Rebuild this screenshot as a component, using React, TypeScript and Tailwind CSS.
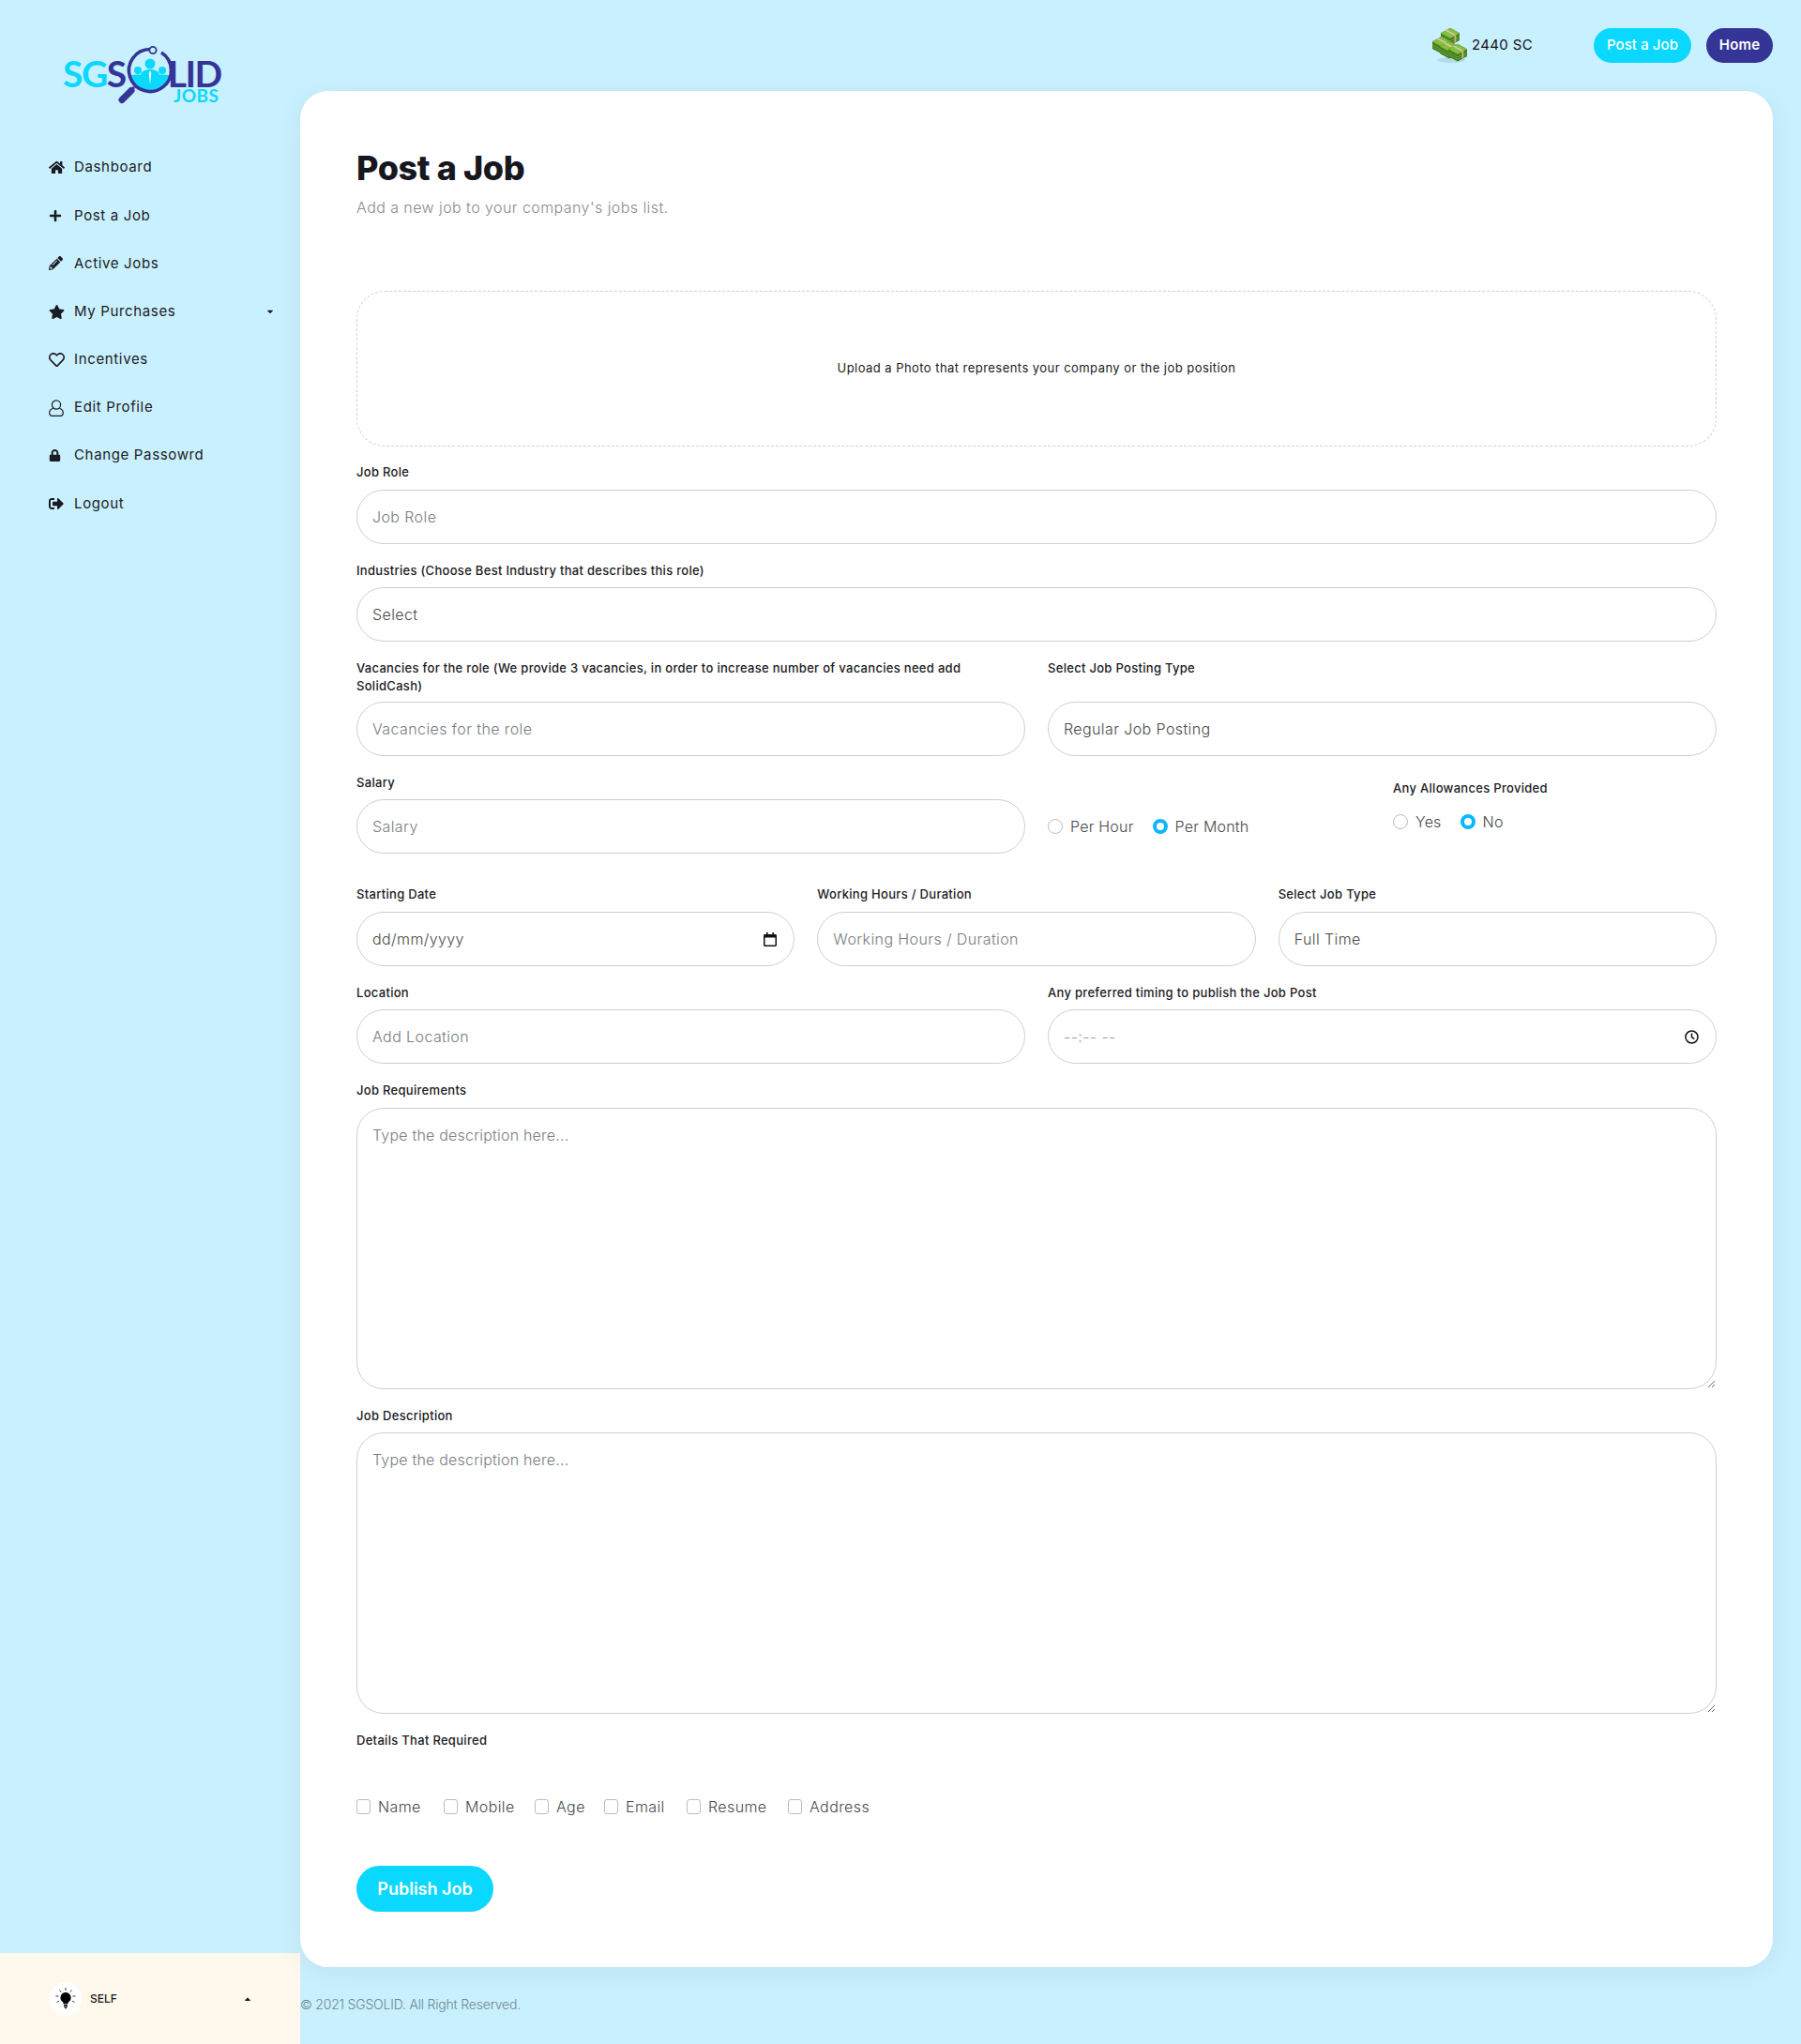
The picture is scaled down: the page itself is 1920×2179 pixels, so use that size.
import { FaHome, FaPlus, FaPencilAlt, FaStar, FaRegHeart, FaLock, FaSignOutAlt, FaCaretDown, FaCaretUp } from 'react-icons/fa';

const font = { fontFamily: 'Inter, "Noto Sans", sans-serif' };

const inputClass = "block w-full h-[58px] rounded-[29px] border border-[#cfcfcf] bg-white px-[16px] text-[16px] font-light tracking-[0.4px] text-[#4a4a4a] placeholder:text-[#777d83] outline-none";
const textareaClass = "block w-full h-[300px] rounded-[29px] border border-[#cfcfcf] px-[16px] py-[16px] text-[16px] font-light tracking-[0.2px] placeholder:text-[#777d83] outline-none";

function Label({ children }: { children: React.ReactNode }) {
	return <label className="block mb-[7.5px] text-[13px] leading-[18.5px] font-medium tracking-[0.3px] text-[#1b1b23] min-h-[20px]">{children}</label>;
}

function Field({ label, placeholder, value, className }: { label: string; placeholder?: string; value?: string; className?: string }) {
	return (
		<div className={className}>
			<Label>{label}</Label>
			<input className={inputClass} placeholder={placeholder} defaultValue={value} />
		</div>
	);
}

function Radio({ label, checked, name }: { label: string; checked?: boolean; name: string }) {
	return (
		<label className="flex items-center gap-[8px] text-[16px] font-light tracking-[0.2px] text-[#4a4a4a]">
			<input type="radio" name={name} defaultChecked={checked} className="appearance-none w-[16px] h-[16px] rounded-full border border-[#bdbdbd] bg-white checked:border-[4px] checked:border-[#0ab8ff]" />
			{label}
		</label>
	);
}

function Check({ label, className }: { label: string; className: string }) {
	return (
		<label className={`flex items-center gap-[8px] text-[16px] font-light tracking-[0.4px] text-[#4a4a4a] ${className}`}>
			<input type="checkbox" className="appearance-none w-[15px] h-[16px] rounded-[3px] border border-[#bdbdbd] bg-white" />
			{label}
		</label>
	);
}

function Logo() {
	return (
		<div className="relative ml-[67px] h-[72px] w-[175px] mt-[48px]">
			<div className="flex items-start pt-[15px] text-[39px] leading-[30px] font-bold tracking-[-1.5px]" style={{ fontFamily: 'Lato, sans-serif' }}>
				<span className="text-[#0ad8ff]">SG</span>
				<span className="text-[#353598]">S</span>
				<span className="w-[45px]" />
				<span className="text-[#353598] tracking-[-1.5px]">LID</span>
			</div>
			<span className="absolute left-[118px] top-[45.5px] text-[19px] leading-[16px] font-bold text-[#0ad8ff] tracking-[0.5px]" style={{ fontFamily: 'Lato, sans-serif' }}>JOBS</span>
			<svg className="absolute left-[55px] top-0" width="70" height="72" viewBox="0 0 70 72">
				<defs>
					<clipPath id="lens"><circle cx="38" cy="27" r="21" /></clipPath>
				</defs>
				<g clipPath="url(#lens)" fill="#0ad8ff">
					<circle cx="38" cy="20" r="5.5" />
					<path d="M28 50V33c0-5 4-7 10-7s10 2 10 7v17z" />
					<circle cx="25" cy="27" r="4" />
					<path d="M14 50V37c0-4 4-5.500 10-5.500s8 1.500 8 5.500v13z" />
					<circle cx="51" cy="27" r="4" />
					<path d="M44 50V37c0-4 2-5.500 8-5.500s10 1.500 10 5.500v13z" />
				</g>
				<path d="M38 27l-1.300 3 1.300 12 1.300-12z" fill="#fff" />
				<path d="M50 8A22.500 22.500 0 1 1 38 4.500" fill="none" stroke="#353598" strokeWidth="3.600" />
				<circle cx="41" cy="5.500" r="3.600" fill="#c9f0ff" stroke="#353598" strokeWidth="1.800" />
				<path d="M21 45l-2.500 2.500" stroke="#353598" strokeWidth="3" />
				<path d="M18 48.500L8 58.500" stroke="#353598" strokeWidth="7" strokeLinecap="round" />
			</svg>
		</div>
	);
}

function Money() {
	// strapped bundles of notes, back to front
	const stack = (x: number, y: number) => (
		<g transform={`translate(${x} ${y})`}>
			<path d="M0 5.500v7.500l10 5.500 10-5.500V5.500z" fill="#3f7a1e" />
			<path d="M0 8.500l10 5.500 10-5.500M0 10.800l10 5.500 10-5.500" stroke="#7db43a" strokeWidth=".8" fill="none" />
			<path d="M10 0L20 5.500 10 11 0 5.500z" fill="#86bf3e" stroke="#5c9a2a" strokeWidth=".6" />
			<path d="M4.500 2.500l10 5.500 1.800-1-10-5.500z" fill="#d9c79f" />
			<path d="M14.500 8v7.500l1.800-1V7z" fill="#c9b486" />
		</g>
	);
	return (
		<svg width="37" height="38" viewBox="0 0 37 38">
			<ellipse cx="20" cy="34" rx="15" ry="3" fill="#8fb4c0" opacity=".35" />
			{stack(9, 0)}
			{stack(0, 9)}
			{stack(8, 14)}
			{stack(17, 17)}
		</svg>
	);
}

function NavItem({ icon, label, caret }: { icon: React.ReactNode; label: string; caret?: boolean }) {
	return (
		<a className="flex items-center h-[51.2px] text-[15px] tracking-[0.65px] text-[#1b1b23]">
			<span className="w-[27px] flex items-center text-[#1b1b23]">{icon}</span>
			<span>{label}</span>
			{caret && <FaCaretDown className="ml-auto text-[10px]" />}
		</a>
	);
}

export default function App() {
	return (
		<div className="flex h-[2179px] bg-[#c9f0ff] text-[#1b1b23] overflow-hidden" style={font}>
			<aside className="w-[320px] flex-shrink-0 flex flex-col">
				<Logo />
				<nav className="mt-[33px] pl-[52px] pr-[27px]">
					<NavItem icon={<FaHome size={17} />} label="Dashboard" />
					<NavItem icon={<FaPlus size={14} />} label="Post a Job" />
					<NavItem icon={<FaPencilAlt size={15} />} label="Active Jobs" />
					<NavItem icon={<FaStar size={17} />} label="My Purchases" caret />
					<NavItem icon={<FaRegHeart size={17} />} label="Incentives" />
					<NavItem
						icon={
							<svg width="16" height="18" viewBox="0 0 16 18" fill="none" stroke="#1b1b23" strokeWidth="1.200">
								<circle cx="8" cy="5.500" r="4.600" />
								<path d="M4.600 9.200C2.400 10 .7 11.500.7 14c0 2 1 3.300 3 3.300h8.600c2 0 3-1.300 3-3.300 0-2.500-1.700-4-3.900-4.800" />
							</svg>
						}
						label="Edit Profile"
					/>
					<NavItem icon={<FaLock size={13} />} label="Change Passowrd" />
					<NavItem icon={<FaSignOutAlt size={16} />} label="Logout" />
				</nav>
				<div className="mt-auto h-[97px] bg-[#fff8ed] flex items-center pl-[53px] pr-[51px]">
					<span className="w-[34px] h-[36px] rounded-full bg-white flex items-center justify-center">
						<svg width="22" height="24" viewBox="0 0 22 24">
							<path d="M11 5a5.600 5.600 0 0 0-3.400 10c.8.7 1 1.400 1 2.300h4.800c0-.9.2-1.600 1-2.300A5.600 5.600 0 0 0 11 5z" fill="#000" />
							<path d="M9 18.600h4M9 20.200h4M10 21.800h2" stroke="#000" strokeWidth="1.100" />
							<path d="M11 0v3M4.500 2.500l1.600 2.200M17.500 2.500l-1.600 2.200M.5 9h3M18.500 9h3M1.500 15.500l2.400-1.300M20.500 15.500l-2.400-1.300" stroke="#222" strokeWidth=".9" />
						</svg>
					</span>
					<span className="ml-[9px] text-[12px] font-medium">SELF</span>
					<FaCaretUp className="ml-auto text-[10px]" />
				</div>
			</aside>

			<main className="flex-1 pr-[30px] flex flex-col min-w-0">
				<header className="h-[97px] flex items-center justify-end">
					<Money />
					<span className="ml-[5px] text-[15px] tracking-[0.35px] text-[#111]">2440 SC</span>
					<a className="ml-[65px] h-[37px] w-[104px] rounded-[19px] bg-[#0ad8ff] text-white text-[15px] font-medium tracking-[0.1px] flex items-center justify-center">Post a Job</a>
					<a className="ml-[16px] h-[37px] w-[71px] rounded-[19px] bg-[#353598] text-white text-[15px] font-semibold tracking-[0.2px] flex items-center justify-center">Home</a>
				</header>

				<section className="bg-white rounded-[30px] h-[2000px] px-[60px] pt-[60px] shadow-[0_5px_30px_rgba(0,0,0,0.06)]">
					<h1 className="text-[36px] leading-[44px] font-extrabold tracking-[-0.4px] text-[#17171f]">Post a Job</h1>
					<p className="mt-[8px] text-[16px] leading-[24px] font-light tracking-[0.43px] text-[#8b8b8b]">Add a new job to your company's jobs list.</p>

					<div className="mt-[77px] mb-[18px] h-[166px] rounded-[30px] border border-dashed border-[#cfcfcf] flex items-center justify-center text-[13px] tracking-[0.45px] text-[#1b1b23]">
						Upload a Photo that represents your company or the job position
					</div>

					<Field className="mb-[19px]" label="Job Role" placeholder="Job Role" />
					<Field className="mb-[19px]" label="Industries (Choose Best Industry that describes this role)" value="Select" />

					<div className="grid grid-cols-2 gap-x-[24px] mb-[19px]">
						<div>
							<div className="pr-[40px]">
								<Label>Vacancies for the role (We provide 3 vacancies, in order to increase number of vacancies need add SolidCash)</Label>
							</div>
							<input className={inputClass} placeholder="Vacancies for the role" />
						</div>
						<div className="flex flex-col justify-between">
							<Label>Select Job Posting Type</Label>
							<input className={inputClass} defaultValue="Regular Job Posting" />
						</div>
					</div>

					<div className="grid grid-cols-2 gap-x-[24px] mb-[34px]">
						<Field label="Salary" placeholder="Salary" />
						<div className="flex">
							<div className="w-[368px] flex items-center gap-[20px] pt-[28px]">
								<Radio name="pay" label="Per Hour" />
								<Radio name="pay" label="Per Month" checked />
							</div>
							<div className="pt-[6px]">
								<Label>Any Allowances Provided</Label>
								<div className="flex items-center gap-[20px] mt-[13px]">
									<Radio name="allow" label="Yes" />
									<Radio name="allow" label="No" checked />
								</div>
							</div>
						</div>
					</div>

					<div className="grid grid-cols-3 gap-x-[24px] mb-[19px]">
						<div>
							<Label>Starting Date</Label>
							<div className="relative">
								<input className={inputClass} defaultValue="dd/mm/yyyy" />
								<svg className="absolute right-[19px] top-[22px]" width="14" height="15" viewBox="0 0 14 15">
									<path d="M3 0h1.600v2h4.800V0H11v2h1.400A1.500 1.500 0 0 1 14 3.500v10a1.500 1.500 0 0 1-1.600 1.500H1.600A1.500 1.500 0 0 1 0 13.500v-10A1.500 1.500 0 0 1 1.600 2H3zM1.500 5.500v8h11v-8z" fill="#111" />
								</svg>
							</div>
						</div>
						<Field label="Working Hours / Duration" placeholder="Working Hours / Duration" />
						<Field label="Select Job Type" value="Full Time" />
					</div>

					<div className="grid grid-cols-2 gap-x-[24px] mb-[19px]">
						<Field label="Location" placeholder="Add Location" />
						<div>
							<Label>Any preferred timing to publish the Job Post</Label>
							<div className="relative">
								<input className={`${inputClass} text-[#9a9a9a]`} defaultValue="--:-- --" />
								<svg className="absolute right-[19px] top-[22px]" width="15" height="15" viewBox="0 0 15 15" fill="none" stroke="#111" strokeWidth="1.500">
									<circle cx="7.500" cy="7.500" r="6.500" />
									<path d="M7.500 3.500v4.200l2.800 2" />
								</svg>
							</div>
						</div>
					</div>

					<div className="mb-[19px]">
						<Label>Job Requirements</Label>
						<textarea className={textareaClass} placeholder="Type the description here..." />
					</div>

					<div className="mb-[19px]">
						<Label>Job Description</Label>
						<textarea className={textareaClass} placeholder="Type the description here..." />
					</div>

					<Label>Details That Required</Label>
					<div className="flex items-center mt-[48px]">
						<Check label="Name" className="w-[93px]" />
						<Check label="Mobile" className="w-[97px]" />
						<Check label="Age" className="w-[74px]" />
						<Check label="Email" className="w-[88px]" />
						<Check label="Resume" className="w-[108px]" />
						<Check label="Address" className="w-[100px]" />
					</div>

					<button className="mt-[51px] h-[49px] w-[146px] rounded-[25px] bg-[#0ad8ff] text-white text-[18px] font-semibold">Publish Job</button>
				</section>

				<footer className="mt-[28px] text-[14px] leading-[24px] font-light tracking-[-0.2px] text-[#6f8791]">© 2021 SGSOLID. All Right Reserved.</footer>
			</main>
		</div>
	);
}
